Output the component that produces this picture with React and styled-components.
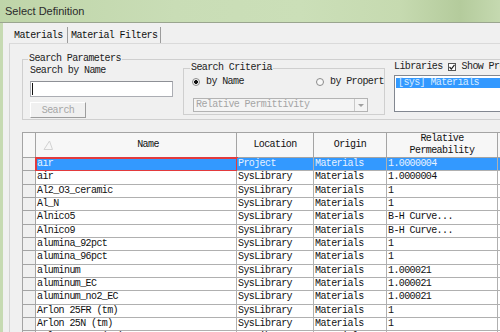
import React from 'react';
import styled, { createGlobalStyle } from 'styled-components';

const GlobalStyle = createGlobalStyle`
  html, body {
    margin: 0;
    padding: 0;
  }
  body {
    width: 500px;
    height: 332px;
    overflow: hidden;
    background: #f0f0f0;
  }
  * {
    box-sizing: border-box;
  }
`;

const mono = `
  font-family: "Liberation Mono", "DejaVu Sans Mono", monospace;
  font-size: 10px;
  letter-spacing: -0.6px;
  white-space: nowrap;
`;

// Window chrome
const Window = styled.div`
  display: flex;
  flex-direction: column;
  width: 500px;
  height: 332px;
`;
const TitleBar = styled.div`
  height: 23px;
  flex: none;
  display: flex;
  align-items: center;
  padding: 0 0 1px 5px;
  border-bottom: 1px solid #9aa58f;
  background: linear-gradient(90deg, #bfd5a9 0%, #c9ddb6 35%, #cbdfb8 60%, #c6dab0 80%, #b4cb9c 92%, #c5d9b0 100%);
  font-family: "Liberation Sans", Arial, sans-serif;
  font-size: 11px;
  color: #2a2a2a;
`;
const Frame = styled.div`
  flex: 1;
  display: flex;
  min-height: 0;
`;
const FrameEdge = styled.div`
  width: 3px;
  flex: none;
  background: #c6dab2;
`;
const Dialog = styled.div`
  flex: 1;
  min-width: 0;
  display: flex;
  flex-direction: column;
  padding: 4px 0 0 6px;
  background: #f0f0f0;
  overflow: hidden;
`;

// Tabs
const TabStrip = styled.div`
  display: flex;
  height: 16px;
  flex: none;
`;
const Tab = styled.div`
  ${mono}
  width: ${p => p.$w}px;
  padding: 1px 0 0 ${p => p.$pad}px;
  line-height: 15px;
  color: #111;
  border-right: 1px solid #9c9c9c;
`;
const TabPanel = styled.div`
  flex: 1;
  min-height: 0;
  padding: 10px 0 0 12px;
  border-top: 1px solid #dadada;
  border-left: 1px solid #d4d4d4;
`;

// Group boxes
const Group = styled.fieldset`
  margin: 0;
  min-width: 0;
  border: 1px solid #cfcfcf;
  padding: ${p => p.$pad};
`;
const Legend = styled.legend`
  ${mono}
  line-height: 10px;
  padding: 0 1px;
  margin-left: -2px;
  color: #222;
`;
const ParamsGroup = styled(Group)`
  border-right: none;
`;
const ParamsRow = styled.div`
  display: flex;
  align-items: flex-start;
`;
const SearchColumn = styled.div`
  display: flex;
  flex-direction: column;
  width: 143px;
  flex: none;
  padding-top: 2px;
`;
const Label = styled.span`
  ${mono}
  line-height: 10px;
  color: #222;
`;
const TextBox = styled.div`
  margin-top: 5px;
  height: 16px;
  background: #fff;
  border: 1px solid #abadb3;
  border-top-color: #8e9096;
`;
const Caret = styled.span`
  display: block;
  width: 1px;
  height: 12px;
  margin: 1px 0 0 1px;
  background: #111;
`;
const Button = styled.div`
  ${mono}
  margin-top: 5px;
  width: 56px;
  height: 16px;
  display: flex;
  align-items: center;
  justify-content: center;
  color: #a6a6a6;
  background: #f0f0f0;
  border: 1px solid;
  border-color: #fff #9d9d9d #9d9d9d #fff;
`;

const CriteriaGroup = styled(Group)`
  flex: none;
  width: 202px;
  margin: -1px 0 0 10px;
`;
const RadioRow = styled.div`
  display: flex;
  height: 10px;
  margin-top: 4px;
  overflow: hidden;
`;
const RadioItem = styled.div`
  ${mono}
  display: flex;
  align-items: center;
  gap: 6px;
  width: ${p => (p.$w ? `${p.$w}px` : 'auto')};
  flex: none;
  line-height: 10px;
  color: #222;
`;
const RadioDot = styled.span`
  width: 8px;
  height: 8px;
  flex: none;
  border-radius: 50%;
  border: 1px solid #8a8a8a;
  background: ${p => (p.$on
    ? 'radial-gradient(circle, #111 0 1.6px, #f4f4f4 2.2px)'
    : '#f8f8f8')};
`;
const Select = styled.div`
  ${mono}
  display: flex;
  width: 175px;
  height: 14px;
  margin: 11px 0 0 1px;
  border: 1px solid #b3b3b3;
  background: #f4f4f4;
  color: #a5a5a5;
  line-height: 12px;
`;
const SelectText = styled.span`
  flex: 1;
  padding-left: 2px;
`;
const SelectArrow = styled.span`
  width: 13px;
  display: flex;
  align-items: center;
  justify-content: center;
  border-left: 1px solid #c9c9c9;
  &::after {
    content: '';
    border-left: 3px solid transparent;
    border-right: 3px solid transparent;
    border-top: 3px solid #a0a0a0;
  }
`;

const LibraryColumn = styled.div`
  flex: 1;
  min-width: 0;
  margin: -2px 0 0 9px;
`;
const LibraryHeader = styled.div`
  ${mono}
  display: flex;
  align-items: center;
  height: 10px;
  line-height: 10px;
  color: #222;
`;
const CheckBox = styled.span`
  width: 8px;
  height: 8px;
  flex: none;
  margin: 0 6px 0 5px;
  border: 1px solid #555;
  background: #fff;
  display: flex;
  align-items: center;
  justify-content: center;
`;
const ListBox = styled.div`
  margin-top: 3px;
  height: 37px;
  padding: 2px 0 0 1px;
  background: #fff;
  border: 1px solid #828790;
  border-right: none;
`;
const ListItem = styled.div`
  ${mono}
  height: 10px;
  line-height: 10px;
  padding-left: 2px;
  background: #3399ff;
  color: #d6ebff;
`;

// Grid
const cols = '13px 201px 77px 73px 111px 80px';
const Grid = styled.div`
  margin-top: 12px;
  border-top: 1px solid #a4a4a4;
  border-left: 1px solid #a4a4a4;
  width: 600px;
`;
const HeaderRow = styled.div`
  display: grid;
  grid-template-columns: ${cols};
  height: 25px;
`;
const HeaderCell = styled.div`
  ${mono}
  display: flex;
  align-items: center;
  justify-content: center;
  white-space: pre-line;
  text-align: center;
  line-height: 12px;
  color: #111;
  background: #f7f7f7;
  border-right: 1px solid #a4a4a4;
  border-bottom: 1px solid #a4a4a4;
`;
const NameHeader = styled(HeaderCell)`
  justify-content: flex-start;
  padding-left: 7px;
`;
const HeaderText = styled.span`
  flex: 1;
  text-align: center;
`;
const SortGlyph = styled.svg`
  width: 10px;
  height: 10px;
  margin-right: 7px;
  flex: none;
`;
const Row = styled.div`
  display: grid;
  grid-template-columns: ${cols};
  height: calc(40px / 3);
`;
const Cell = styled.div`
  ${mono}
  line-height: 12px;
  padding-left: 1px;
  overflow: hidden;
  color: ${p => (p.$sel ? '#e6f2ff' : '#111')};
  background: ${p => (p.$sel ? '#3399ff' : '#fff')};
  border-right: 1px solid #b0b0b0;
  border-bottom: 1px solid #b0b0b0;
  outline: ${p => (p.$focus ? '2px solid #e23a3d' : 'none')};
  outline-offset: -1px;
`;
const RowHead = styled.div`
  background: #f0f0f0;
  border-right: 1px solid #a4a4a4;
  border-bottom: 1px solid #a4a4a4;
`;

const rows = [
  ['air', 'Project', 'Materials', '1.0000004'],
  ['air', 'SysLibrary', 'Materials', '1.0000004'],
  ['Al2_O3_ceramic', 'SysLibrary', 'Materials', '1'],
  ['Al_N', 'SysLibrary', 'Materials', '1'],
  ['Alnico5', 'SysLibrary', 'Materials', 'B-H Curve...'],
  ['Alnico9', 'SysLibrary', 'Materials', 'B-H Curve...'],
  ['alumina_92pct', 'SysLibrary', 'Materials', '1'],
  ['alumina_96pct', 'SysLibrary', 'Materials', '1'],
  ['aluminum', 'SysLibrary', 'Materials', '1.000021'],
  ['aluminum_EC', 'SysLibrary', 'Materials', '1.000021'],
  ['aluminum_no2_EC', 'SysLibrary', 'Materials', '1.000021'],
  ['Arlon 25FR (tm)', 'SysLibrary', 'Materials', '1'],
  ['Arlon 25N (tm)', 'SysLibrary', 'Materials', '1'],
  ['Arlon AD250 (tm)', 'SysLibrary', 'Materials', '1'],
];

export default function App() {
  return (
    <Window>
      <GlobalStyle />
      <TitleBar>Select Definition</TitleBar>
      <Frame>
        <FrameEdge />
        <Dialog>
          <TabStrip>
            <Tab $w={59} $pad={5}>Materials</Tab>
            <Tab $w={93} $pad={3}>Material Filters</Tab>
          </TabStrip>
          <TabPanel>
            <ParamsGroup $pad="0 0 1px 7px">
              <Legend>Search Parameters</Legend>
              <ParamsRow>
                <SearchColumn>
                  <Label>Search by Name</Label>
                  <TextBox><Caret /></TextBox>
                  <Button>Search</Button>
                </SearchColumn>
                <CriteriaGroup $pad="0 0 2px 8px">
                  <Legend>Search Criteria</Legend>
                  <RadioRow>
                    <RadioItem $w={124}><RadioDot $on />by Name</RadioItem>
                    <RadioItem><RadioDot />by Property</RadioItem>
                  </RadioRow>
                  <Select>
                    <SelectText>Relative Permittivity</SelectText>
                    <SelectArrow />
                  </Select>
                </CriteriaGroup>
                <LibraryColumn>
                  <LibraryHeader>
                    Libraries
                    <CheckBox>
                      <svg width="6" height="6" viewBox="0 0 6 6">
                        <path d="M0.5 3 L2.3 5 L5.5 0.8" fill="none" stroke="#222" strokeWidth="1.2" />
                      </svg>
                    </CheckBox>
                    Show Project definitions
                  </LibraryHeader>
                  <ListBox>
                    <ListItem>[sys] Materials</ListItem>
                  </ListBox>
                </LibraryColumn>
              </ParamsRow>
            </ParamsGroup>

            <Grid>
              <HeaderRow>
                <HeaderCell />
                <NameHeader>
                  <SortGlyph viewBox="0 0 10 10">
                    <path d="M1 9.5 L6.5 1 M6.5 1 L9.5 9.5 M1 9.5 L9.5 9.5" fill="none" stroke="#d2d2d2" strokeWidth="1" />
                  </SortGlyph>
                  <HeaderText>Name</HeaderText>
                </NameHeader>
                <HeaderCell>Location</HeaderCell>
                <HeaderCell>Origin</HeaderCell>
                <HeaderCell>{'Relative\nPermeability'}</HeaderCell>
                <HeaderCell />
              </HeaderRow>
              {rows.map((r, i) => (
                <Row key={i}>
                  <RowHead />
                  <Cell $sel={i === 0} $focus={i === 0}>{r[0]}</Cell>
                  <Cell $sel={i === 0}>{r[1]}</Cell>
                  <Cell $sel={i === 0}>{r[2]}</Cell>
                  <Cell $sel={i === 0}>{r[3]}</Cell>
                  <Cell $sel={i === 0} />
                </Row>
              ))}
            </Grid>
          </TabPanel>
        </Dialog>
      </Frame>
    </Window>
  );
}
